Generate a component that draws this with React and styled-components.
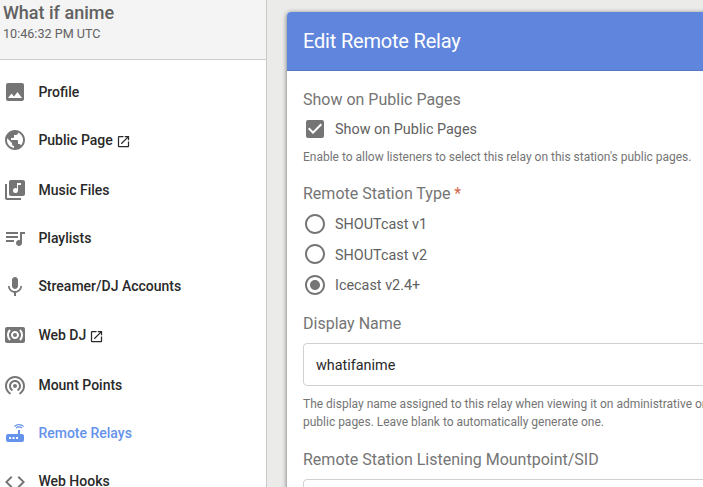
import React from "react";
import styled, { createGlobalStyle } from "styled-components";
import {
  MdImage, MdPublic, MdLibraryMusic, MdQueueMusic, MdMic, MdSurroundSound,
  MdWifiTethering, MdRouter, MdCode, MdOpenInNew, MdCheckBox,
  MdRadioButtonUnchecked, MdRadioButtonChecked,
} from "react-icons/md";

const GlobalStyle = createGlobalStyle`
  *, *::before, *::after { box-sizing: border-box; }
  body {
    margin: 0;
    overflow: hidden;
    background: #ebebea;
    font-family: Roboto, "Liberation Sans", sans-serif;
  }
`;

const Page = styled.div`
  display: flex;
  height: 487px;
  overflow: hidden;
`;

const Sidebar = styled.aside`
  flex: 0 0 267px;
  background: #fff;
  border-right: 1px solid #c9c9c9;
`;

const StationHeader = styled.header`
  height: 60px;
  padding: 1px 3px 0;
  background: #f4f4f4;
  border-bottom: 1px solid #cdcdcd;
  color: #616161;
`;

const StationName = styled.h1`
  margin: 0;
  font-size: 18px;
  line-height: 24px;
  font-weight: 500;
`;

const Clock = styled.div`
  font-size: 12.6px;
  line-height: 18px;
`;

const Menu = styled.nav`
  display: flex;
  flex-direction: column;
  padding-top: 8px;
`;

const MenuItem = styled.a`
  display: flex;
  align-items: center;
  height: 48px;
  margin-top: ${(p) => p.$gap}px;
  padding-left: 3px;
  gap: 11.4px;
  font-size: 14px;
  font-weight: 500;
  line-height: 20px;
  color: ${(p) => (p.$active ? "#6592eb" : "#292929")};

  > svg {
    flex: none;
    margin-top: ${(p) => p.$iconDrop * 2}px;
    color: ${(p) => (p.$active ? "#6592eb" : "#757575")};
  }
`;

const MenuLabel = styled.span`
  display: flex;
  align-items: center;
  gap: 3px;

  svg { margin-top: 3px; }
`;

const Main = styled.main`
  flex: none;
  width: 520px;
  padding: 12px 0 0 20px;
`;

const Card = styled.section`
  height: 600px;
  background: #fff;
  border-radius: 4px;
  box-shadow: 0 1px 5px rgba(0, 0, 0, 0.55);
`;

const CardHeader = styled.h2`
  height: 59px;
  margin: 0;
  padding: 0 16px;
  border-bottom: 1px solid #5478c4;
  border-radius: 4px 4px 0 0;
  background: #6085dc;
  color: #fff;
  font-size: 20px;
  line-height: 58px;
  font-weight: 400;
  letter-spacing: -0.19px;
`;

const Form = styled.form`
  padding: 17px 16px;
`;

const FieldLabel = styled.div`
  height: 24px;
  margin-top: ${(p) => p.$gap || 0}px;
  font-size: 16px;
  line-height: 24px;
  color: #757575;
`;

const Required = styled.span`
  color: #d4694a;
`;

const ChoiceList = styled.div`
  height: 94px;
  padding-top: 2.7px;
`;

const Choice = styled.label`
  display: flex;
  align-items: center;
  gap: 8px;
  height: ${(p) => p.$height}px;
  font-size: 14.4px;
  line-height: 20px;
  color: #616161;

  svg { color: #757575; }
  span { padding-top: 2.6px; }
`;

const Help = styled.p`
  margin: ${(p) => p.$gap}px 0 0;
  font-size: 12px;
  line-height: 18px;
  letter-spacing: -0.008px;
  color: #757575;
  white-space: nowrap;
`;

const TextInput = styled.input`
  display: block;
  width: 480px;
  height: 43px;
  margin-top: ${(p) => p.$gap}px;
  padding: 2px 12px 0;
  border: 1px solid #ced0d1;
  border-radius: 4px;
  outline: none;
  background: #fff;
  color: #292929;
  font: 400 14.4px/20px Roboto, sans-serif;
`;

const menu = [
  { label: "Profile", Icon: MdImage },
  { label: "Public Page", Icon: MdPublic, external: true },
  { label: "Music Files", Icon: MdLibraryMusic, gap: 2 },
  { label: "Playlists", Icon: MdQueueMusic },
  { label: "Streamer/DJ Accounts", Icon: MdMic, iconDrop: 1 },
  { label: "Web DJ", Icon: MdSurroundSound, external: true, gap: 1 },
  { label: "Mount Points", Icon: MdWifiTethering, gap: 2 },
  { label: "Remote Relays", Icon: MdRouter, active: true },
  { label: "Web Hooks", Icon: MdCode, iconDrop: 1 },
];

const stationTypes = [
  { label: "SHOUTcast v1", Icon: MdRadioButtonUnchecked },
  { label: "SHOUTcast v2", Icon: MdRadioButtonUnchecked },
  { label: "Icecast v2.4+", Icon: MdRadioButtonChecked },
];

export default function App() {
  return (
    <Page>
      <GlobalStyle />
      <Sidebar>
        <StationHeader>
          <StationName>What if anime</StationName>
          <Clock>10:46:32 PM UTC</Clock>
        </StationHeader>
        <Menu>
          {menu.map(({ label, Icon, external, active, gap = 0, iconDrop = 0 }) => (
            <MenuItem key={label} $active={active} $gap={gap} $iconDrop={iconDrop}>
              <Icon size={24} />
              <MenuLabel>
                {label}
                {external && <MdOpenInNew size={15} />}
              </MenuLabel>
            </MenuItem>
          ))}
        </Menu>
      </Sidebar>
      <Main>
        <Card>
          <CardHeader>Edit Remote Relay</CardHeader>
          <Form>
            <FieldLabel>Show on Public Pages</FieldLabel>
            <Choice $height={34}>
              <MdCheckBox size={24} />
              <span>Show on Public Pages</span>
            </Choice>
            <Help $gap={2}>
              Enable to allow listeners to select this relay on this station's public pages.
            </Help>
            <FieldLabel $gap={16}>
              Remote Station Type <Required>*</Required>
            </FieldLabel>
            <ChoiceList>
              {stationTypes.map(({ label, Icon }) => (
                <Choice key={label} $height={30.4}>
                  <Icon size={24} />
                  <span>{label}</span>
                </Choice>
              ))}
            </ChoiceList>
            <FieldLabel $gap={12}>Display Name</FieldLabel>
            <TextInput $gap={7} defaultValue="whatifanime" />
            <Help $gap={9}>
              The display name assigned to this relay when viewing it on administrative or
              <br />
              public pages. Leave blank to automatically generate one.
            </Help>
            <FieldLabel $gap={17}>Remote Station Listening Mountpoint/SID</FieldLabel>
            <TextInput $gap={7} />
          </Form>
        </Card>
      </Main>
    </Page>
  );
}
